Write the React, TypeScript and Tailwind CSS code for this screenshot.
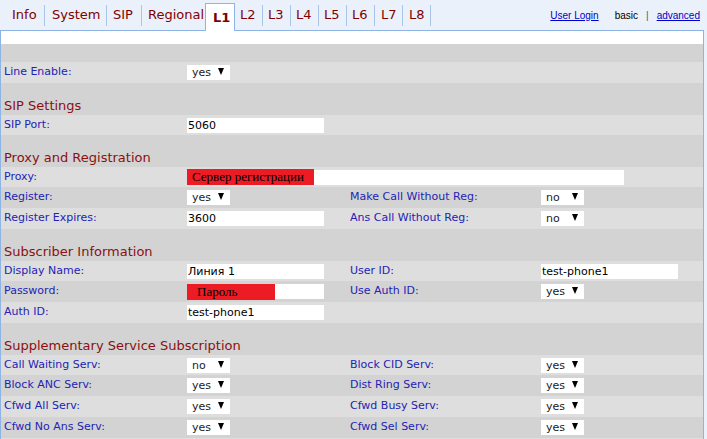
import React from "react";

const LIGHT = "bg-[#dedede]";
const DARK = "bg-[#d3d3d3]";

function Tab({ label, className }: { label: string; className: string }) {
  return <div className={"flex items-center h-full text-[#800000] " + className}>{label}</div>;
}

function Sep() {
  return <span className="w-px h-[21px] bg-[#a9c6e8] self-center"></span>;
}

function Select({ value }: { value: string }) {
  return (
    <div className="relative w-[43px] h-[15px] bg-white text-[#222] text-[11px] leading-[15px] pl-[5px]">
      {value}
      <svg className="absolute left-[31px] top-[3px]" width="6" height="7" viewBox="0 0 6 7">
        <polygon points="0,0 6,0 3,7" fill="#000" />
      </svg>
    </div>
  );
}

function Input({ value, wide }: { value: React.ReactNode; wide?: boolean }) {
  return (
    <div className={(wide ? "w-[437px]" : "w-[137px]") + " h-[15px] bg-white text-black text-[11px] leading-[15px] pl-px flex items-center"}>
      {value}
    </div>
  );
}

function Red({ text, w, pl }: { text: string; w: string; pl: string }) {
  return (
    <span className={"h-[16px] bg-[#ed1c24] text-black text-[13px] leading-[16px] -ml-px " + w + " " + pl} style={{ fontFamily: '"Liberation Serif", "Times New Roman", serif' }}>
      {text}
    </span>
  );
}

type Cell = React.ReactNode;

function Row({ h, bg, l1, v1, l2, v2 }: { h: string; bg: string; l1?: string; v1?: Cell; l2?: string; v2?: Cell }) {
  return (
    <div className={"flex items-center " + h + " " + bg}>
      <div className="w-[186px] pl-[3px] text-[#2323b5]">{l1}</div>
      <div className="w-[163px]">{v1}</div>
      <div className="w-[191px] text-[#2323b5]">{l2}</div>
      <div className="flex-1">{v2}</div>
    </div>
  );
}

function Heading({ title }: { title: string }) {
  return (
    <>
      <div className={"h-[14px] " + DARK}></div>
      <div className={"h-[18px] flex items-center pl-[3px] text-[13px] text-[#8b1010] " + DARK}>{title}</div>
    </>
  );
}

export default function App() {
  return (
    <div className="w-[707px] h-[439px] overflow-hidden bg-[#eaf1fb]" style={{ fontFamily: '"DejaVu Sans", Verdana, sans-serif' }}>
      {/* tab bar */}
      <div className="relative z-10 flex h-[30px] text-[13px]">
        <Tab label="Info" className="w-[44px] pl-[12px]" />
        <Sep />
        <Tab label="System" className="w-[61px] pl-[7px]" />
        <Sep />
        <Tab label="SIP" className="w-[34px] pl-[6px]" />
        <Sep />
        <Tab label="Regional" className="w-[62px] pl-[6px]" />
        <div className="flex items-center self-end h-[28px] -mb-px w-[30px] ml-px pl-[7px] bg-white border border-b-0 border-[#8eb4e3] font-bold text-[#800000]">L1</div>
        <Tab label="L2" className="w-[27px] pl-[5px]" />
        <Sep />
        <Tab label="L3" className="w-[27px] pl-[5px]" />
        <Sep />
        <Tab label="L4" className="w-[27px] pl-[5px]" />
        <Sep />
        <Tab label="L5" className="w-[27px] pl-[5px]" />
        <Sep />
        <Tab label="L6" className="w-[27px] pl-[5px]" />
        <Sep />
        <Tab label="L7" className="w-[27px] pl-[6px]" />
        <Sep />
        <Tab label="L8" className="w-[27px] pl-[6px]" />
        <Sep />
        <div className="ml-auto mr-[7px] flex items-center text-[10px]" style={{ fontFamily: '"Liberation Sans", Arial, sans-serif' }}>
          <a className="text-[#0000cc] underline">User Login</a>
          <span className="ml-[16px] text-black">basic</span>
          <span className="ml-[8px] text-[#555]">|</span>
          <a className="ml-[8px] text-[#0000cc] underline">advanced</a>
        </div>
      </div>

      {/* panel */}
      <div className="w-[704px] border-l border-r border-t border-[#8eb4e3] bg-white text-[11px]">
        <div className="h-[13px] bg-white"></div>
        <div className={"h-[18px] " + DARK}></div>
        <Row h="h-[21px]" bg={LIGHT} l1="Line Enable:" v1={<Select value="yes" />} />

        <Heading title="SIP Settings" />
        <Row h="h-[20px]" bg={LIGHT} l1="SIP Port:" v1={<Input value="5060" />} />

        <Heading title="Proxy and Registration" />
        <div className={"flex items-center h-[20px] " + LIGHT}>
          <div className="w-[186px] pl-[3px] text-[#2323b5]">Proxy:</div>
          <Input wide value={<Red text="Сервер регистрации" w="w-[127px]" pl="pl-[5px]" />} />
        </div>
        <Row h="h-[21px]" bg={DARK} l1="Register:" v1={<Select value="yes" />} l2="Make Call Without Reg:" v2={<Select value="no" />} />
        <Row h="h-[21px]" bg={LIGHT} l1="Register Expires:" v1={<Input value="3600" />} l2="Ans Call Without Reg:" v2={<Select value="no" />} />

        <Heading title="Subscriber Information" />
        <Row h="h-[20px]" bg={LIGHT} l1="Display Name:" v1={<Input value="Линия 1" />} l2="User ID:" v2={<Input value="test-phone1" />} />
        <Row h="h-[21px]" bg={DARK} l1="Password:" v1={<Input value={<Red text="Пароль" w="w-[88px]" pl="pl-[10px]" />} />} l2="Use Auth ID:" v2={<Select value="yes" />} />
        <Row h="h-[21px]" bg={LIGHT} l1="Auth ID:" v1={<Input value="test-phone1" />} />

        <Heading title="Supplementary Service Subscription" />
        <Row h="h-[20px]" bg={LIGHT} l1="Call Waiting Serv:" v1={<Select value="no" />} l2="Block CID Serv:" v2={<Select value="yes" />} />
        <Row h="h-[21px]" bg={DARK} l1="Block ANC Serv:" v1={<Select value="yes" />} l2="Dist Ring Serv:" v2={<Select value="yes" />} />
        <Row h="h-[21px]" bg={LIGHT} l1="Cfwd All Serv:" v1={<Select value="yes" />} l2="Cfwd Busy Serv:" v2={<Select value="yes" />} />
        <Row h="h-[21px]" bg={DARK} l1="Cfwd No Ans Serv:" v1={<Select value="yes" />} l2="Cfwd Sel Serv:" v2={<Select value="yes" />} />
        <Row h="h-[21px]" bg={LIGHT} />
      </div>
    </div>
  );
}
